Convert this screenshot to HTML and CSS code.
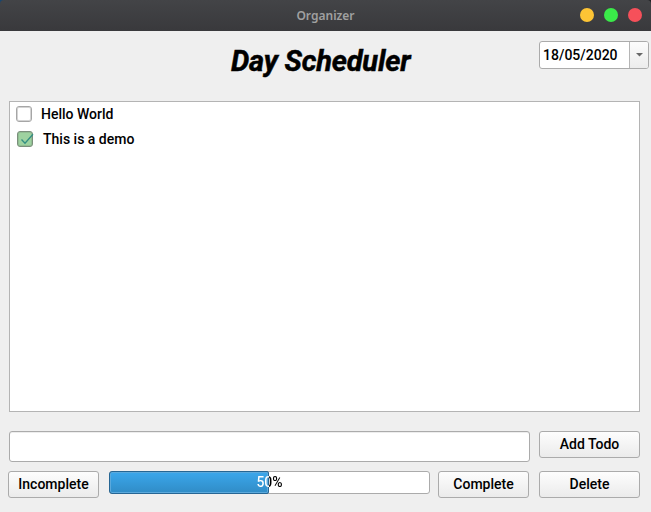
FILE: index.html
```html
<!DOCTYPE html>
<html lang="en">
<head>
<meta charset="utf-8">
<title>Organizer</title>
<link rel="stylesheet" href="styles.css">
</head>
<body>
<div class="window">
  <header class="titlebar">
    <span class="window-title">Organizer</span>
    <div class="controls">
      <i class="dot minimize"></i><i class="dot maximize"></i><i class="dot close"></i>
    </div>
  </header>
  <main class="content">
    <div class="top">
      <h1><span class="heading-text">Day Scheduler</span></h1>
      <div class="date">
        <span class="date-value">18/05/2020</span>
        <span class="date-arrow"><svg width="7" height="4" viewBox="0 0 7 4"><path d="M0 0h7L3.5 3.5z" fill="#686868"/></svg></span>
      </div>
    </div>
    <ul class="todos">
      <li class="todo"><span class="check"></span><span>Hello World</span></li>
      <li class="todo done"><span class="check"><svg width="16" height="16" viewBox="0 0 16 16"><path d="M4.5 8.5l3.5 3.8L16 3.2" fill="none" stroke="#338f83" stroke-width="1.3"/></svg></span><span>This is a demo</span></li>
    </ul>
    <div class="entry-row">
      <input class="entry" type="text">
      <button class="btn">Add Todo</button>
    </div>
    <div class="action-row">
      <button class="btn">Incomplete</button>
      <div class="progress"><div class="fill"></div><span class="percent">50%</span></div>
      <button class="btn">Complete</button>
      <button class="btn">Delete</button>
    </div>
  </main>
</div>
</body>
</html>
```

FILE: styles.css
```css
* { box-sizing: border-box; }
body {
  margin: 0;
  background: #efefef;
  color: #000;
  font: 500 14px/18px Roboto, sans-serif;
}
.window {
  height: 512px;
  overflow: hidden;
  background: linear-gradient(90deg, #17456f 50%, #202124 50%) 0 0 / 100% 6px no-repeat;
}
.titlebar {
  display: grid;
  grid-template-columns: 1fr auto 1fr;
  align-items: center;
  height: 31px;
  background: linear-gradient(#434447, #39393c);
  border-radius: 4px 4px 0 0;
}
.window-title {
  grid-column: 2;
  color: #a0a0a0;
  font: 600 12px/16px "Noto Sans", sans-serif;
}
.controls {
  display: flex;
  justify-content: flex-end;
  gap: 10px;
  padding-right: 9px;
}
.dot { width: 14px; height: 14px; margin-bottom: 1px; border-radius: 50%; }
.minimize { background: #fdc435; }
.maximize { background: #3aea49; }
.close { background: #f6505a; }
.content { padding: 10px 2px 0 8px; }
.top {
  display: grid;
  grid-template-columns: 531px 110px;
  height: 60px;
}
h1 {
  margin: 0;
  padding: 2px 0 0 223px;
  font: italic 700 29px/36px Roboto, sans-serif;
  white-space: nowrap;
}
.heading-text { letter-spacing: -0.2px; -webkit-text-stroke: 0.5px #000; }
.date {
  display: grid;
  grid-template-columns: 1fr 19px;
  height: 28px;
  border: 1px solid #ababab;
  border-radius: 3px;
  background: #fff;
  overflow: hidden;
}
.date-value { padding: 4px 0 0 3px; }
.date-arrow {
  display: flex;
  align-items: center;
  justify-content: center;
  border-left: 1px solid #b5b5b5;
  background: linear-gradient(#fcfcfc, #ececec);
}
.todos {
  width: 631px;
  height: 311px;
  margin: 0 0 19px 1px;
  padding: 0 0 0 6px;
  border: 1px solid #b4b4b4;
  background: #fff;
  list-style: none;
}
.todo { display: flex; align-items: center; gap: 9px; height: 25px; padding-bottom: 1px; }
.check {
  width: 16px;
  height: 16px;
  border: 1px solid #a6a6a6;
  border-radius: 3px;
  background: #fff;
  box-shadow: inset 0 0 0 1px #d4d4d4;
}
.done { padding-left: 1px; gap: 10px; }
.done .check { background: #9ed2a0; border-color: #7b8f7c; box-shadow: inset 0 0 0 1px #91bd92; }
.check svg { display: block; margin: -1px; overflow: visible; }
.entry-row {
  display: grid;
  grid-template-columns: 521px 101px;
  gap: 9px;
  align-items: start;
  height: 40px;
  padding-left: 1px;
}
.entry {
  height: 31px;
  border: 1px solid #ababab;
  border-radius: 3px;
  background: #fff;
  box-shadow: inset 0 1px #ededed;
  outline: 0;
}
.action-row {
  display: grid;
  grid-template-columns: 91px 10px 321px 8px 91px 10px 101px;
  align-items: start;
}
.action-row > :nth-child(2) { grid-column: 3; }
.action-row > :nth-child(3) { grid-column: 5; }
.action-row > :nth-child(4) { grid-column: 7; }
.btn {
  height: 27px;
  padding: 0 0 1px;
  border: 1px solid #ababab;
  border-radius: 3px;
  background: linear-gradient(#fdfdfd, #ebebeb);
  color: inherit;
  font: inherit;
}
.progress {
  display: grid;
  height: 23px;
  border: 1px solid #ababab;
  border-radius: 3px;
  background: #fff;
}
.progress > * { grid-area: 1 / 1; }
.fill {
  width: 160px;
  margin: -1px;
  border: 1px solid #266694;
  border-radius: 3px 2px 2px 3px;
  background: linear-gradient(#3ba7ec, #308cc6);
  box-shadow: inset 0 0 0 1px #5ba9dc;
}
.percent {
  padding-top: 1px;
  text-align: center;
  color: transparent;
  background: linear-gradient(90deg, #fff 159px, #000 159px);
  -webkit-background-clip: text;
  background-clip: text;
}
```
